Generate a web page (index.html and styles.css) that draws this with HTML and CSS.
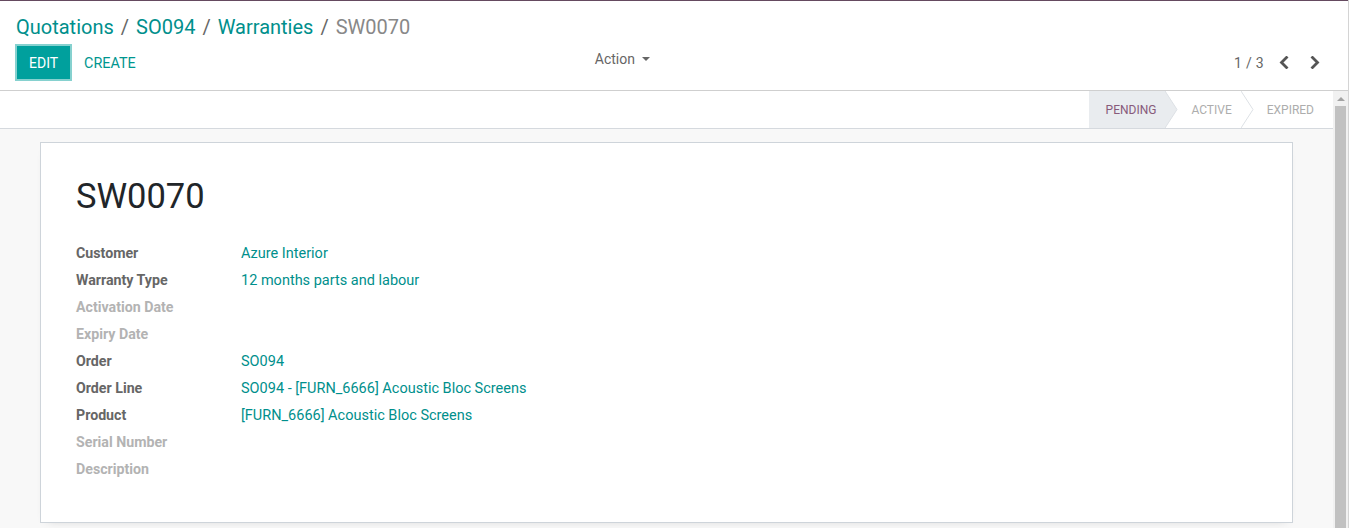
FILE: index.html
```html
<!DOCTYPE html>
<html lang="en">
<head>
<meta charset="utf-8">
<title>SW0070</title>
<link rel="stylesheet" href="styles.css">
</head>
<body>
<div class="app">
  <div class="topline"></div>
  <div class="control-panel">
    <ol class="breadcrumb">
      <li class="crumb"><a href="#">Quotations</a></li>
      <li class="crumb"><a href="#">SO094</a></li>
      <li class="crumb"><a href="#">Warranties</a></li>
      <li class="crumb active">SW0070</li>
    </ol>
    <div class="cp-row">
      <div class="cp-left">
        <div class="cp-buttons">
          <button class="btn btn-primary">Edit</button>
          <button class="btn btn-secondary">Create</button>
        </div>
        <button class="action-toggle">Action <span class="caret"></span></button>
      </div>
      <div class="cp-right">
        <span class="pager-value">1 / 3</span>
        <button class="pager-btn" aria-label="Previous">
          <svg width="10" height="13" viewBox="0 0 10 13"><polyline points="7.5,1.5 2.5,6.5 7.5,11.5" fill="none" stroke="#555" stroke-width="2.8" stroke-linecap="square"/></svg>
        </button>
        <button class="pager-btn" aria-label="Next">
          <svg width="10" height="13" viewBox="0 0 10 13"><polyline points="2.5,1.5 7.5,6.5 2.5,11.5" fill="none" stroke="#555" stroke-width="2.8" stroke-linecap="square"/></svg>
        </button>
      </div>
    </div>
  </div>
  <div class="content">
    <div class="inner">
      <div class="statusbar">
        <div class="status current">Pending
          <svg class="arrow" width="13" height="37" viewBox="0 0 13 37"><polygon points="0,0 12,18.5 0,37" fill="#e9ecef"/><polyline points="0,0 12,18.5 0,37" fill="none" stroke="#dde1e5" stroke-width="1"/></svg>
        </div>
        <div class="status">Active
          <svg class="arrow" width="13" height="37" viewBox="0 0 13 37"><polyline points="0,0 12,18.5 0,37" fill="none" stroke="#dde1e5" stroke-width="1"/></svg>
        </div>
        <div class="status">Expired</div>
      </div>
      <div class="sheet">
        <h1 class="title">SW0070</h1>
        <div class="fields">
          <div class="label">Customer</div><div class="value"><a href="#">Azure Interior</a></div>
          <div class="label">Warranty Type</div><div class="value"><a href="#">12 months parts and labour</a></div>
          <div class="label empty">Activation Date</div><div class="value"></div>
          <div class="label empty">Expiry Date</div><div class="value"></div>
          <div class="label">Order</div><div class="value"><a href="#">SO094</a></div>
          <div class="label">Order Line</div><div class="value"><a href="#">SO094 - [FURN_6666] Acoustic Bloc Screens</a></div>
          <div class="label">Product</div><div class="value"><a href="#">[FURN_6666] Acoustic Bloc Screens</a></div>
          <div class="label empty">Serial Number</div><div class="value"></div>
          <div class="label empty">Description</div><div class="value"></div>
        </div>
      </div>
    </div>
    <div class="scrollbar" aria-hidden="true">
      <div class="sb-up"><span class="sb-arrow"></span></div>
      <div class="sb-thumb"></div>
    </div>
  </div>
</div>
</body>
</html>
```

FILE: styles.css
```css
* { box-sizing: border-box; }
html, body { margin: 0; padding: 0; height: 100%; overflow: hidden; background: #fff; }
body { font-family: Roboto, "Noto Sans", sans-serif; font-size: 14px; color: #666; }
a { color: #008f8c; text-decoration: none; }

.app {
  width: 1349px;
  border-right: 1px solid #d4d4d4;
  display: flex;
  flex-direction: column;
}
.topline { height: 1px; background: #654a60; }

.control-panel {
  height: 90px;
  padding: 11px 16px 0 16px;
  border-bottom: 1px solid #cfcfcf;
  background: #fff;
}
.breadcrumb {
  list-style: none;
  margin: 0;
  padding: 0;
  display: flex;
  font-size: 20px;
  line-height: 30px;
}
.crumb + .crumb::before {
  content: "/";
  color: #666;
  padding: 0 7px 0 7px;
}
.crumb.active { color: #888; }

.cp-row {
  display: grid;
  grid-template-columns: 1fr 1fr;
  margin-top: 4px;
  align-items: center;
}
.cp-left { display: flex; align-items: center; justify-content: space-between; }
.cp-buttons { display: flex; gap: 2px; }
.btn {
  font-family: inherit;
  font-size: 14px;
  line-height: 21px;
  text-transform: uppercase;
  padding: 7px 12px 5px 12px;
  border: 0;
  background: transparent;
  cursor: pointer;
}
.btn-primary {
  background: #00a09d;
  color: #fff;
  margin-left: 1px;
  box-shadow: 0 0 0 2px #86d1cf;
}
.btn-secondary { color: #00968f; font-size: 14.4px; }

.action-toggle {
  font-family: inherit;
  font-size: 14px;
  color: #666;
  background: transparent;
  border: 0;
  padding: 0 12px;
  margin-right: 12px;
  margin-bottom: 7px;
  line-height: 20px;
  display: flex;
  align-items: center;
}
.caret {
  display: inline-block;
  margin-left: 7px;
  border-left: 4px solid transparent;
  border-right: 4px solid transparent;
  border-top: 4px solid #666;
}

.cp-right { display: flex; justify-content: flex-end; align-items: center; }
.pager-value { color: #666; margin-right: 4px; letter-spacing: 0.3px; }
.pager-btn {
  width: 31px;
  height: 33px;
  border: 0;
  background: transparent;
  padding: 0;
  display: flex;
  align-items: center;
  justify-content: center;
}
.pager-btn:last-child { margin-right: 2px; }

.content {
  height: 470px;
  display: flex;
  background: #f8f8f8;
  overflow: hidden;
}
.inner { flex: 1; min-width: 0; padding-bottom: 40px; }

.scrollbar {
  width: 15px;
  flex: none;
  background: #f1f1f1;
  display: flex;
  flex-direction: column;
  align-items: center;
}
.sb-up {
  height: 15px;
  width: 15px;
  display: flex;
  align-items: center;
  justify-content: center;
}
.sb-arrow {
  border-left: 4px solid transparent;
  border-right: 4px solid transparent;
  border-bottom: 4px solid #a3a3a3;
}
.sb-thumb {
  width: 11px;
  flex: 1;
  margin-bottom: 15px;
  background: #c1c1c1;
}

.statusbar {
  height: 38px;
  background: #fff;
  border-bottom: 1px solid #d5d9de;
  display: flex;
  justify-content: flex-end;
}
.status {
  position: relative;
  font-size: 12px;
  text-transform: uppercase;
  color: #adadad;
  padding: 0 10px 0 25px;
  display: flex;
  align-items: center;
  height: 37px;
}
.status:first-child { padding-left: 17px; }
.status:last-child { padding-right: 19px; }
.status.current { background: #e9ecef; color: #875a7b; }
.status .arrow {
  position: absolute;
  top: 0;
  right: -12px;
  z-index: 1;
}

.sheet {
  margin: 13px 40px 0 40px;
  background: #fff;
  border: 1px solid #ced4da;
  box-shadow: 0 4px 10px -8px rgba(0, 0, 0, 0.25);
  padding: 32px 35px 40px 35px;
}
.title {
  margin: 0 0 22px 0;
  font-size: 34.5px;
  font-weight: 400;
  line-height: 42px;
  color: #212529;
}
.fields {
  display: grid;
  grid-template-columns: 165px 1fr;
  grid-auto-rows: 27px;
  align-items: center;
}
.label { font-weight: 700; color: #666; font-size: 14.2px; }
.label.empty { color: #b3b3b3; }
.value { color: #008f8c; font-size: 14.5px; padding-top: 2px; }
```
